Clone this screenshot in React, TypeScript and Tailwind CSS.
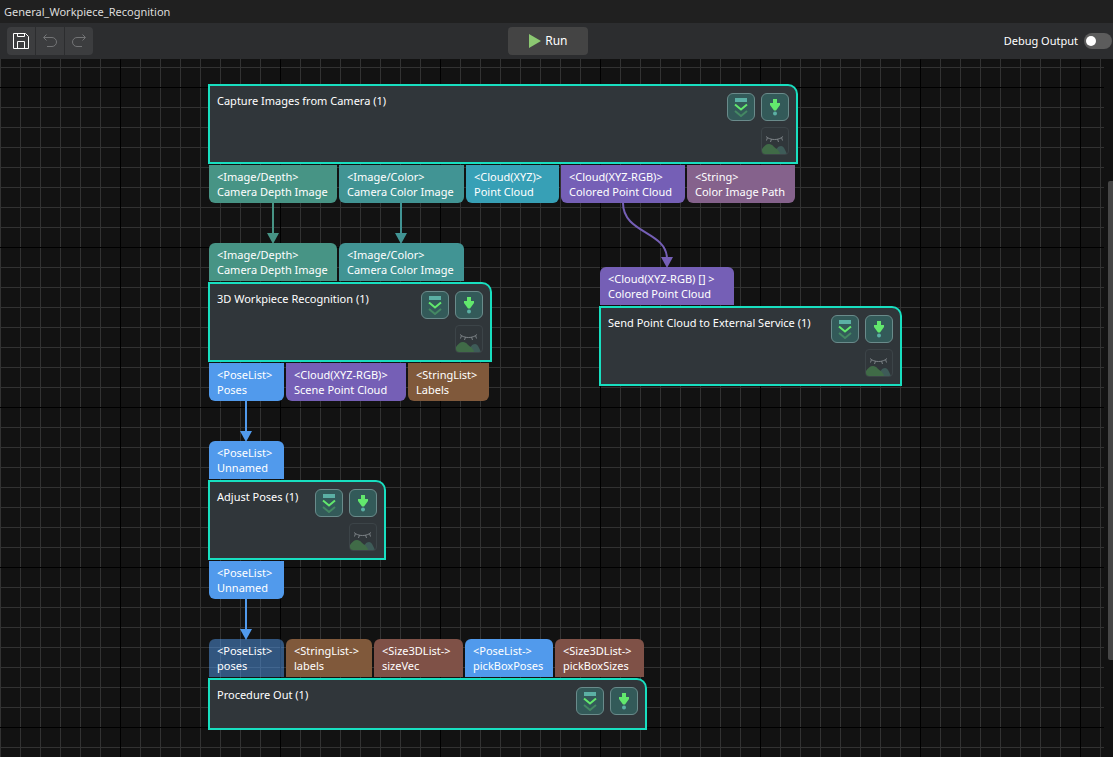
import type { ReactNode } from "react";

type PortData = {
    type: string;
    name: string;
    className: string;
};

type NodeData = {
    title: string;
    className: string;
    bodyClassName: string;
    inputs: PortData[];
    outputs: PortData[];
    preview: boolean;
};

const nodes: NodeData[] = [
    {
        title: "Capture Images from Camera (1)",
        className: "left-[208px] top-[25px] w-[590px]",
        bodyClassName: "h-20",
        inputs: [],
        outputs: [
            { type: "<Image/Depth>", name: "Camera Depth Image", className: "w-32 bg-[#479485]" },
            { type: "<Image/Color>", name: "Camera Color Image", className: "w-[125px] bg-[#419494]" },
            { type: "<Cloud(XYZ)>", name: "Point Cloud", className: "w-[93px] bg-[#37a0b6]" },
            { type: "<Cloud(XYZ-RGB)>", name: "Colored Point Cloud", className: "w-[124px] bg-[#755fb6]" },
            { type: "<String>", name: "Color Image Path", className: "w-[108px] bg-[#85628c]" },
        ],
        preview: true,
    },
    {
        title: "3D Workpiece Recognition (1)",
        className: "left-[208px] top-[184px] w-[284px]",
        bodyClassName: "h-20",
        inputs: [
            { type: "<Image/Depth>", name: "Camera Depth Image", className: "w-32 bg-[#479485]" },
            { type: "<Image/Color>", name: "Camera Color Image", className: "w-[125px] bg-[#419494]" },
        ],
        outputs: [
            { type: "<PoseList>", name: "Poses", className: "w-[75px] bg-[#519aec]" },
            { type: "<Cloud(XYZ-RGB)>", name: "Scene Point Cloud", className: "w-[120px] bg-[#755fb6]" },
            { type: "<StringList>", name: "Labels", className: "w-[81px] bg-[#80593b]" },
        ],
        preview: true,
    },
    {
        title: "Send Point Cloud to External Service (1)",
        className: "left-[599px] top-[208px] w-[303px]",
        bodyClassName: "h-20",
        inputs: [{ type: "<Cloud(XYZ-RGB) [] >", name: "Colored Point Cloud", className: "w-[134px] bg-[#755fb6]" }],
        outputs: [],
        preview: true,
    },
    {
        title: "Adjust Poses (1)",
        className: "left-[208px] top-[382px] w-[178px]",
        bodyClassName: "h-20",
        inputs: [{ type: "<PoseList>", name: "Unnamed", className: "w-[75px] bg-[#519aec]" }],
        outputs: [{ type: "<PoseList>", name: "Unnamed", className: "w-[75px] bg-[#519aec]" }],
        preview: true,
    },
    {
        title: "Procedure Out (1)",
        className: "left-[208px] top-[580px] w-[439px]",
        bodyClassName: "h-[52px]",
        inputs: [
            { type: "<PoseList>", name: "poses", className: "w-[75px] bg-[#519aec]/50" },
            { type: "<StringList->", name: "labels", className: "w-[86px] bg-[#80593b]" },
            { type: "<Size3DList->", name: "sizeVec", className: "w-[89px] bg-[#7f5147]" },
            { type: "<PoseList->", name: "pickBoxPoses", className: "w-[88px] bg-[#519aec]" },
            { type: "<Size3DList->", name: "pickBoxSizes", className: "w-[89px] bg-[#7f5147]" },
        ],
        outputs: [],
        preview: false,
    },
];

// Paths are in canvas coordinates, x/y is the tip of the arrow head
const links = [
    { d: "M273 144V176", x: 273, y: 184, color: "#479485" },
    { d: "M401 144V176", x: 401, y: 184, color: "#419494" },
    { d: "M623 144C623 175 667 172 667 200", x: 667, y: 208, color: "#755fb6" },
    { d: "M246 342V374", x: 246, y: 382, color: "#519aec" },
    { d: "M246 540V572", x: 246, y: 580, color: "#519aec" },
];

function Links() {
    return (
        <svg className="absolute inset-0 h-full w-full" fill="none" aria-hidden="true">
            {links.map((link) => (
                <g key={link.d}>
                    <path d={link.d} stroke={link.color} strokeWidth="2" />
                    <path d={`M${link.x - 6} ${link.y - 10}h12l-6 11z`} fill={link.color} />
                </g>
            ))}
        </svg>
    );
}

function Port({ port, side }: { port: PortData; side: "in" | "out" }) {
    return (
        <div className={`h-[38px] px-2 pt-1 leading-[15px] whitespace-nowrap ${side === "in" ? "rounded-t-md" : "rounded-b-md"} ${port.className}`}>
            <div>{port.type}</div>
            <div>{port.name}</div>
        </div>
    );
}

function PortRow({ ports, side }: { ports: PortData[]; side: "in" | "out" }) {
    return (
        <div className="flex gap-0.5 px-px">
            {ports.map((port) => (
                <Port key={port.type + port.name} port={port} side={side} />
            ))}
        </div>
    );
}

function NodeButton({ label, children }: { label: string; children: ReactNode }) {
    return (
        <button type="button" aria-label={label} className="flex size-7 items-center justify-center rounded-md border border-[#6a8b8b] bg-[#335a59]">
            {children}
        </button>
    );
}

function StepIcon() {
    return (
        <svg className="size-5 shrink-0" viewBox="0 0 20 20" fill="none" aria-hidden="true">
            <rect x="4" y="1" width="12" height="4" fill="#5bb0a4" />
            <path d="M4 14l6 5 6-5" stroke="#448863" strokeWidth="2" />
            <path d="M4 7.500l6 5 6-5" stroke="#62e86d" strokeWidth="2" />
        </svg>
    );
}

function RunStepIcon() {
    return (
        <svg className="size-5 shrink-0" viewBox="0 0 20 20" aria-hidden="true">
            <path d="M8 2h4v4h3v2l-4 5.500h-2l-4-5.500v-2h3z" fill="#62e86d" />
            <circle cx="10" cy="16.500" r="2" fill="#5bb0a4" />
        </svg>
    );
}

function PreviewIcon() {
    return (
        <svg className="size-[26px]" viewBox="0 0 26 26" fill="none" aria-hidden="true">
            <path d="M12 26c2-5 4-8 7-8 3 0 4 4 6 8z" fill="#3e5b58" />
            <path d="M0 26v-5c2-3 4-5 7-5 4 0 5 4 8 5 1 1 3 3 3 5z" fill="#406b47" />
            <path d="M4 8.500c4 4 13 4 17 0M5.500 9.500l-1 3M9.500 11l-1 3M15.500 11l1 3M19.500 9.500l1 3" stroke="#7c8286" />
        </svg>
    );
}

function FlowNode({ node }: { node: NodeData }) {
    return (
        <section className={`absolute flex flex-col gap-px ${node.className}`}>
            {node.inputs.length > 0 && <PortRow ports={node.inputs} side="in" />}
            <div className={`flex items-start justify-between rounded-tr-[10px] border-2 border-[#18dfc0] bg-[#30363a] p-[7px] ${node.bodyClassName}`}>
                <h2 className="leading-4 whitespace-nowrap">{node.title}</h2>
                <div className="grid grid-cols-2 gap-1.5">
                    <NodeButton label="Run to this step">
                        <StepIcon />
                    </NodeButton>
                    <NodeButton label="Run this step">
                        <RunStepIcon />
                    </NodeButton>
                    {node.preview && (
                        <button type="button" aria-label="Show output" className="col-start-2 size-7 overflow-hidden rounded-sm border border-[#3c4448]">
                            <PreviewIcon />
                        </button>
                    )}
                </div>
            </div>
            {node.outputs.length > 0 && <PortRow ports={node.outputs} side="out" />}
        </section>
    );
}

function Toolbar() {
    return (
        <div className="flex h-9 items-center justify-between bg-[#2c2d2f] pr-px pl-[7px]">
            <div className="flex gap-px overflow-hidden rounded-[4px]">
                <button type="button" aria-label="Save" className="flex size-7 items-center justify-center bg-[#3c3d3f] text-white">
                    <svg className="size-4" viewBox="0 0 16 16" fill="none" stroke="currentColor" aria-hidden="true">
                        <path d="M.5 .5h12l3 3v12H.5zM4.500 .5v3h7v-3M4.500 15.500v-7h7v7" />
                    </svg>
                </button>
                <button type="button" aria-label="Undo" disabled className="flex size-7 items-center justify-center bg-[#3c3d3f] text-[#737476]">
                    <svg className="size-4" viewBox="0 0 16 16" fill="none" stroke="currentColor" aria-hidden="true">
                        <path d="M4.500 1.500l-3 3 3 3M2 4.500h8a4.500 4.500 0 0 1 0 9H5" />
                    </svg>
                </button>
                <button type="button" aria-label="Redo" disabled className="flex size-7 items-center justify-center bg-[#3c3d3f] text-[#737476]">
                    <svg className="size-4" viewBox="0 0 16 16" fill="none" stroke="currentColor" aria-hidden="true">
                        <path d="M11.500 1.500l3 3-3 3M14 4.500H6a4.500 4.500 0 0 0 0 9h5" />
                    </svg>
                </button>
            </div>

            <button type="button" className="flex h-7 w-20 items-center justify-center gap-1 rounded-[4px] bg-[#444444] text-xs text-white">
                <svg className="h-[14px] w-3" viewBox="0 0 12 14" aria-hidden="true">
                    <path d="M0 0l12 7-12 7z" fill="#8cc872" />
                </svg>
                Run
            </button>

            <label className="flex items-center gap-1.5 text-white">
                Debug Output
                <input
                    type="checkbox"
                    role="switch"
                    className="flex h-4 w-7 appearance-none items-center rounded-full bg-[#5c5c5c] px-0.5 before:size-[10px] before:rounded-full before:bg-white checked:justify-end"
                />
            </label>
        </div>
    );
}

export default function App() {
    return (
        <div className="flex min-h-screen flex-col bg-[#121212] font-['Noto_Sans',sans-serif] text-[11px] text-white">
            <header className="h-[23px] bg-[#202020] px-1 leading-[23px] text-[#dcdcdc]">
                <h1>General_Workpiece_Recognition</h1>
            </header>
            <Toolbar />
            <div className="flex flex-1">
                <main className="relative min-h-[698px] flex-1 overflow-hidden bg-[linear-gradient(to_right,#000_1px,transparent_1px),linear-gradient(to_bottom,#000_1px,transparent_1px),linear-gradient(to_right,#323232_1px,transparent_1px),linear-gradient(to_bottom,#323232_1px,transparent_1px)] bg-[size:160px_160px,160px_160px,20px_20px,20px_20px] bg-[position:120px_0,0_28px,0_0,0_8px]">
                    <Links />
                    {nodes.map((node) => (
                        <FlowNode key={node.title} node={node} />
                    ))}
                </main>
                <div className="flex w-[9px] justify-end pt-[122px]">
                    <div className="h-[479px] w-[5px] rounded-l-xs bg-[#464646]" />
                </div>
            </div>
        </div>
    );
}
